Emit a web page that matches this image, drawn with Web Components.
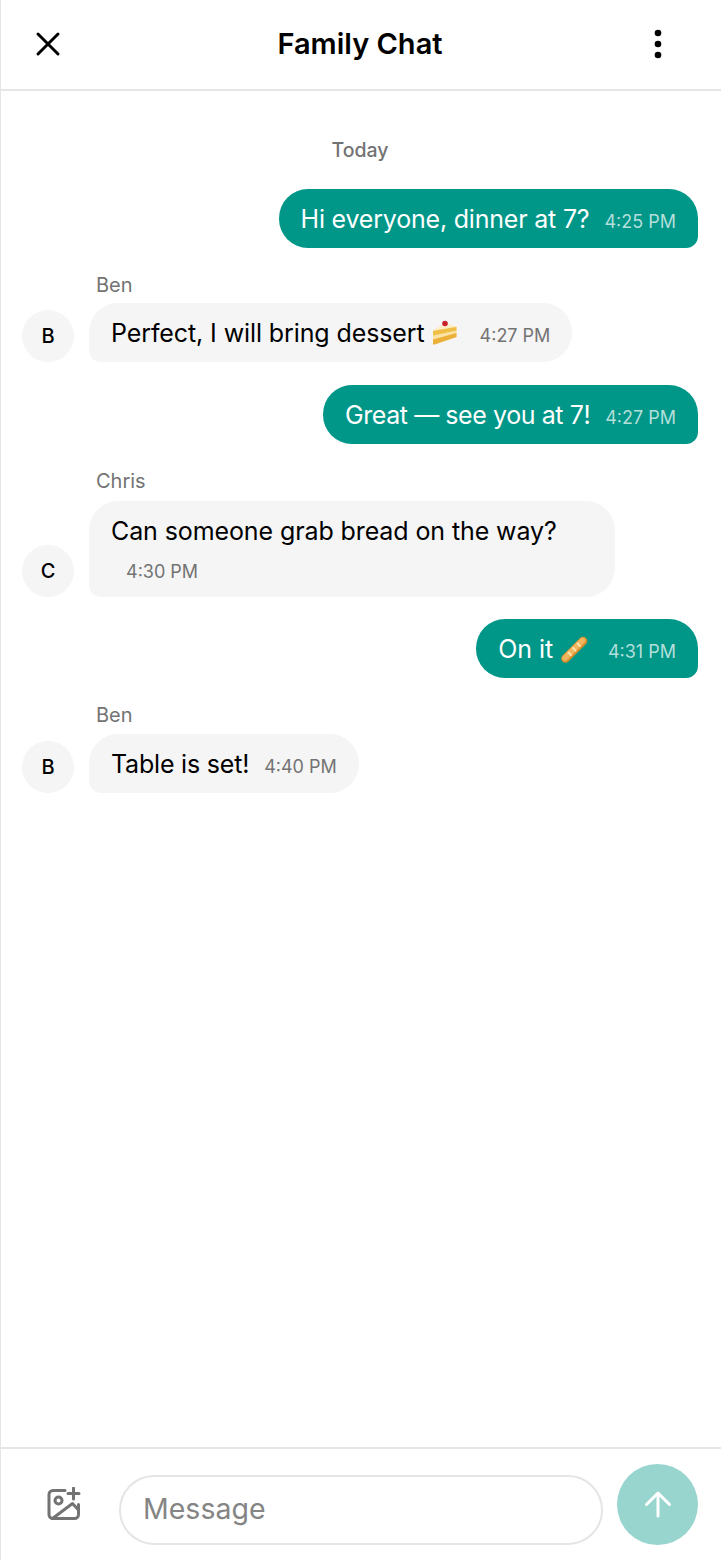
<!DOCTYPE html>
<html lang="en">
<head>
<meta charset="utf-8">
<title>Family Chat</title>
<style>
    html, body { margin: 0; padding: 0; background: #fff; }
    body { font-family: Inter, "Liberation Sans", sans-serif; color: #000; }
</style>
</head>
<body>
<chat-app>
    <chat-header slot="header" title="Family Chat"></chat-header>
    <chat-day>Today</chat-day>
    <chat-message mine time="4:25 PM" style="margin-top:26px;letter-spacing:-0.2px">Hi everyone, dinner at 7?</chat-message>
    <chat-message from="Ben" initial="B" time="4:27 PM" style="margin-top:24px;--name-gap:5px">Perfect, I will bring dessert <chat-emoji name="cake"></chat-emoji></chat-message>
    <chat-message mine time="4:27 PM" style="margin-top:23px;letter-spacing:-0.42px">Great — see you at 7!</chat-message>
    <chat-message from="Chris" initial="C" time="4:30 PM" style="margin-top:24px;--name-gap:7px">Can someone grab bread on the way?</chat-message>
    <chat-message mine time="4:31 PM" style="margin-top:22px">On it <chat-emoji name="bread"></chat-emoji></chat-message>
    <chat-message from="Ben" initial="B" time="4:40 PM" style="margin-top:24px;--name-gap:6px;letter-spacing:-0.2px">Table is set!</chat-message>
    <chat-composer slot="footer" placeholder="Message"></chat-composer>
</chat-app>

<script>
class ChatApp extends HTMLElement {
    constructor() {
        super();
        this.attachShadow({ mode: 'open' });
        this.shadowRoot.innerHTML = `
            <style>
                :host { display: flex; flex-direction: column; height: 1560px; box-sizing: border-box; border-left: 1px solid #e5e5e5; }
                main { flex: 1; display: flex; flex-direction: column; padding: 46px 23px 0 21px; min-height: 0; }
            </style>
            <slot name="header"></slot>
            <main><slot></slot></main>
            <slot name="footer"></slot>
        `;
    }
}

class ChatHeader extends HTMLElement {
    constructor() {
        super();
        this.attachShadow({ mode: 'open' });
        this.shadowRoot.innerHTML = `
            <style>
                :host { display: grid; grid-template-columns: 1fr auto 1fr; align-items: center; height: 88px; padding: 0 23px 1px 21px; border-bottom: 2px solid #e5e5e5; }
                button { all: unset; width: 52px; height: 52px; display: flex; justify-content: center; align-items: center; }
                button.more { width: 81px; justify-self: end; }
                h1 { margin: 0 0 1px; font-size: 29px; font-weight: 600; }
            </style>
            <button aria-label="Close">
                <svg width="26" height="26" viewBox="0 0 26 26" fill="none" stroke="#000" stroke-width="3" stroke-linecap="round"><path d="M3 3l20 20M23 3 3 23"/></svg>
            </button>
            <h1>${this.getAttribute('title')}</h1>
            <button class="more" aria-label="More">
                <svg width="10" height="32" viewBox="0 0 10 32" fill="#000"><circle cx="5" cy="5" r="3.3"/><circle cx="5" cy="16" r="3.3"/><circle cx="5" cy="27" r="3.3"/></svg>
            </button>
        `;
    }
}

class ChatDay extends HTMLElement {
    constructor() {
        super();
        this.attachShadow({ mode: 'open' });
        this.shadowRoot.innerHTML = `
            <style>
                :host { display: block; text-align: center; font-size: 19.5px; font-weight: 500; line-height: 26px; color: #737373; }
            </style>
            <slot></slot>
        `;
    }
}

class ChatAvatar extends HTMLElement {
    constructor() {
        super();
        this.attachShadow({ mode: 'open' });
        this.shadowRoot.innerHTML = `
            <style>
                :host { display: flex; flex: none; justify-content: center; align-items: center; width: 52px; height: 52px; border-radius: 50%; background: #f5f5f5; font-size: 20px; font-weight: 500; letter-spacing: 0; }
            </style>
            <slot></slot>
        `;
    }
}

class ChatMessage extends HTMLElement {
    constructor() {
        super();
        this.attachShadow({ mode: 'open' });
        const mine = this.hasAttribute('mine');
        const from = this.getAttribute('from');
        this.shadowRoot.innerHTML = `
            <style>
                :host { display: flex; justify-content: ${mine ? 'flex-end' : 'flex-start'}; align-items: flex-end; gap: 15px; letter-spacing: -0.1px; }
                .col { display: flex; flex-direction: column; align-items: flex-start; min-width: 0; }
                .from { font-size: 20px; line-height: 26px; letter-spacing: 0; color: #737373; margin: 0 0 var(--name-gap, 5px) 7px; }
                .bubble { display: flex; flex-wrap: wrap; align-items: baseline; row-gap: 8px; box-sizing: border-box; max-width: 526px; padding: 13px 22px 11px; font-size: 25px; line-height: 35px; }
                .mine { background: #009688; color: #fff; border-radius: 29px 29px 12px 29px; }
                .theirs { background: #f5f5f5; color: #000; border-radius: 29px 29px 29px 12px; }
                .time { margin-left: 15px; font-size: 18px; line-height: 29px; letter-spacing: 0; white-space: nowrap; }
                .mine .time { color: #b3dfdb; }
                .theirs .time { color: #737373; }
            </style>
            ${from ? `<chat-avatar>${this.getAttribute('initial')}</chat-avatar>` : ''}
            <div class="col">
                ${from ? `<div class="from">${from}</div>` : ''}
                <div class="bubble ${mine ? 'mine' : 'theirs'}">
                    <span class="text"><slot></slot></span>
                    <span class="time">${this.getAttribute('time')}</span>
                </div>
            </div>
        `;
    }
}

class ChatEmoji extends HTMLElement {
    constructor() {
        super();
        this.attachShadow({ mode: 'open' });
        const art = {
            cake: `
                <path d="M1 10.500 13 3.500 24.500 6.500V17L2.500 24.500C1.600 24.700 1 24.200 1 23.300z" fill="#fae3a5"/>
                <path d="M1 10.500 13 3.500 24.500 6.500z" fill="#fdeec8"/>
                <path d="M1 11 24.500 7v3.500L1 15.500z" fill="#f0bd45"/>
                <path d="M1 19.500 24.500 13V17L2.500 24.500C1.600 24.700 1 24.200 1 23.300z" fill="#ebb038"/>
                <circle cx="13" cy="3.500" r="2.800" fill="#c8232c"/>
            `,
            bread: `
                <path d="M5.500 23.500 23 6" stroke="#d98f2e" stroke-width="8.500" stroke-linecap="round"/>
                <path d="M5 23 22.500 5.500" stroke="#efb65f" stroke-width="5.500" stroke-linecap="round"/>
                <path d="M8.500 17.500l2.500 2.500M13 13l2.500 2.500M17.500 8.500l2.500 2.500" stroke="#fbe3ad" stroke-width="2" stroke-linecap="round"/>
            `
        };
        const name = this.getAttribute('name');
        this.shadowRoot.innerHTML = `
            <style>
                :host { display: inline-block; width: 33px; height: 26px; vertical-align: -3px; }
                svg { display: block; overflow: visible; transform: translateY(${name === 'cake' ? 1 : 0}px); }
            </style>
            <svg width="28" height="27" viewBox="0 0 28 27" fill="none" role="img" aria-label="${name}">${art[name]}</svg>
        `;
    }
}

class ChatComposer extends HTMLElement {
    constructor() {
        super();
        this.attachShadow({ mode: 'open' });
        this.shadowRoot.innerHTML = `
            <style>
                :host { display: flex; align-items: flex-end; gap: 15px; padding: 15px 23px 15px 21px; border-top: 2px solid #e5e5e5; }
                button { all: unset; flex: none; width: 81px; height: 81px; display: flex; justify-content: center; align-items: center; border-radius: 50%; }
                .send { background: #99d5cf; }
                .field { flex: 1; box-sizing: border-box; height: 70px; margin: 0 -1px 0 1px; display: flex; align-items: center; padding: 0 22px 3px 22px; border: 2px solid #e5e5e5; border-radius: 35px; font-size: 28.500px; color: #858585; }
            </style>
            <button aria-label="Add image">
                <svg width="36" height="36" viewBox="0 0 36 36" fill="none" stroke="#737373" stroke-width="3" stroke-linecap="round" stroke-linejoin="round">
                    <path d="M20 3.500H8a4 4 0 0 0-4 4v20a4 4 0 0 0 4 4h21.500a4 4 0 0 0 4-4v-10"/>
                    <circle cx="13.500" cy="13.500" r="3.500"/>
                    <path d="M7.500 31.500 27.500 16.500 33.500 23"/>
                    <path d="M28.500 1v11M23 6.500h11"/>
                </svg>
            </button>
            <div class="field">${this.getAttribute('placeholder')}</div>
            <button class="send" aria-label="Send">
                <svg width="30" height="30" viewBox="0 0 30 30" fill="none" stroke="#fff" stroke-width="3" stroke-linecap="round" stroke-linejoin="round"><path d="M15 26V3M3.500 14.500 15 3l11.500 11.500"/></svg>
            </button>
        `;
    }
}

customElements.define('chat-avatar', ChatAvatar);
customElements.define('chat-emoji', ChatEmoji);
customElements.define('chat-header', ChatHeader);
customElements.define('chat-day', ChatDay);
customElements.define('chat-message', ChatMessage);
customElements.define('chat-composer', ChatComposer);
customElements.define('chat-app', ChatApp);
</script>
</body>
</html>
